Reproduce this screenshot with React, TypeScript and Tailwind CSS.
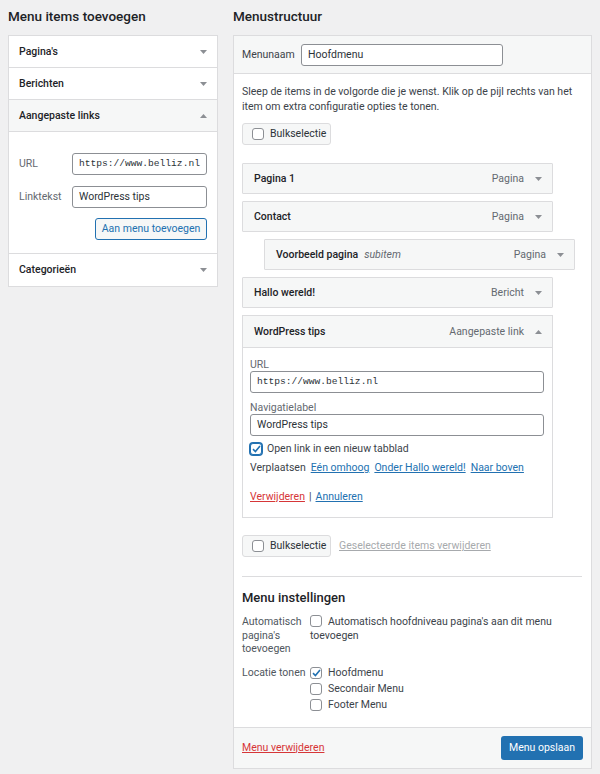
import React from 'react';

const font = "font-['Roboto','Liberation_Sans',sans-serif]";

function Arrow({ up = false }: { up?: boolean }) {
  return (
    <svg width="7" height="4" viewBox="0 0 7 4" className="shrink-0">
      <path d={up ? 'M0 4 L3.5 0 L7 4 Z' : 'M0 0 L7 0 L3.5 4 Z'} fill="#8c8f94" />
    </svg>
  );
}

function Check({ checked = false, focus = false }: { checked?: boolean; focus?: boolean }) {
  return (
    <span
      className={`inline-flex h-[12px] w-[12px] shrink-0 items-center justify-center rounded-[3px] border bg-white align-[-2px] ${
        focus ? 'border-[#2271b1] ring-1 ring-[#2271b1]' : 'border-[#8c8f94]'
      }`}
    >
      {checked && (
        <svg width="9" height="8" viewBox="0 0 9 8">
          <path d="M1 4.2 L3.4 6.5 L8 1" fill="none" stroke="#2271b1" strokeWidth="1.6" />
        </svg>
      )}
    </span>
  );
}

function BulkButton() {
  return (
    <button className="flex h-[22px] w-[89px] items-center gap-[6px] rounded-[3px] border border-[#dcdcde] bg-[#f6f7f7] pl-[9px] text-[10.5px] text-[#2c3338]">
      <Check />
      Bulkselectie
    </button>
  );
}

function Accordion({ title, open = false, last = false }: { title: string; open?: boolean; last?: boolean }) {
  return (
    <div
      className={`flex h-[32px] items-center justify-between px-[10px] ${last ? '' : 'border-b border-[#dcdcde]'} ${
        open ? 'bg-[#f6f7f7]' : 'bg-white'
      }`}
    >
      <span className="text-[10.5px] font-medium text-[#1d2327]">{title}</span>
      <Arrow up={open} />
    </div>
  );
}

function MenuItem({ title, type, sub }: { title: string; type: string; sub?: string }) {
  return (
    <div
      className={`flex h-[31px] w-[311px] items-center rounded-[1px] border border-[#dcdcde] bg-[#f6f7f7] pl-[11px] pr-[10px] ${
        sub ? 'ml-[22px]' : ''
      }`}
    >
      <span className="text-[10.5px] font-medium text-[#1d2327]">{title}</span>
      {sub && <span className="ml-[6px] text-[10.5px] italic text-[#646970]">{sub}</span>}
      <span className="ml-auto mr-[11px] text-[10.5px] text-[#646970]">{type}</span>
      <Arrow />
    </div>
  );
}

export default function App() {
  return (
    <div className={`${font} flex min-h-[774px] gap-[15px] bg-[#f0f0f1] pl-[8px] text-[#3c434a]`}>
      {/* linker kolom */}
      <div className="w-[210px] shrink-0">
        <h2 className="h-[35px] pt-[7px] text-[13.5px] font-medium leading-[18px] text-[#1d2327]">
          Menu items toevoegen
        </h2>
        <div className="border border-[#dcdcde] bg-white">
          <Accordion title="Pagina's" />
          <Accordion title="Berichten" />
          <Accordion title="Aangepaste links" open />
          <div className="border-b border-[#dcdcde] px-[10px] pb-[13px] pt-[21px]">
            <div className="flex items-center">
              <span className="w-[53px] text-[10.5px] text-[#646970]">URL</span>
              <div className="flex h-[22px] w-[135px] items-center rounded-[3px] border border-[#8c8f94] px-[6px] font-['Liberation_Mono',monospace] text-[9.6px] text-[#2c3338]">
                https://www.belliz.nl
              </div>
            </div>
            <div className="mt-[11px] flex items-center">
              <span className="w-[53px] text-[10.5px] text-[#646970]">Linktekst</span>
              <div className="flex h-[22px] w-[135px] items-center rounded-[3px] border border-[#8c8f94] px-[6px] text-[10.5px] text-[#2c3338]">
                WordPress tips
              </div>
            </div>
            <div className="mt-[10px] flex justify-end">
              <button className="h-[22px] w-[112px] rounded-[3px] border border-[#2271b1] bg-[#f6f7f7] text-[10.5px] text-[#2271b1]">
                Aan menu toevoegen
              </button>
            </div>
          </div>
          <Accordion title="Categorieën" last />
        </div>
      </div>

      {/* rechter kolom */}
      <div className="w-[359px] shrink-0">
        <h2 className="h-[35px] pt-[7px] text-[13.5px] font-medium leading-[18px] text-[#1d2327]">Menustructuur</h2>
        <div className="border border-[#dcdcde] bg-white">
          <div className="flex h-[38px] items-center border-b border-[#dcdcde] bg-[#f6f7f7] px-[8px]">
            <span className="w-[59px] text-[10.5px] text-[#3c434a]">Menunaam</span>
            <div className="flex h-[22px] w-[202px] items-center rounded-[3px] border border-[#8c8f94] bg-white px-[6px] text-[10.5px] text-[#2c3338]">
              Hoofdmenu
            </div>
          </div>

          <div className="pl-[8px] pr-[9px] pt-[10px]">
            <p className="text-[10.5px] leading-[15px] text-[#3c434a]">
              Sleep de items in de volgorde die je wenst. Klik op de pijl rechts van het item om extra configuratie opties te
              tonen.
            </p>
            <div className="mt-[9px]">
              <BulkButton />
            </div>

            <div className="mt-[18px] flex flex-col gap-[7px]">
              <MenuItem title="Pagina 1" type="Pagina" />
              <MenuItem title="Contact" type="Pagina" />
              <MenuItem title="Voorbeeld pagina" sub="subitem" type="Pagina" />
              <MenuItem title="Hallo wereld!" type="Bericht" />

              <div className="w-[311px] border border-[#dcdcde] bg-white">
                <div className="flex h-[32px] items-center border-b border-[#dcdcde] bg-[#f6f7f7] pl-[11px] pr-[10px]">
                  <span className="text-[10.5px] font-medium text-[#1d2327]">WordPress tips</span>
                  <span className="ml-auto mr-[11px] text-[10.5px] text-[#646970]">Aangepaste link</span>
                  <Arrow up />
                </div>
                <div className="pb-[13px] pl-[7px] pr-[8px] pt-[10px] text-[10.5px]">
                  <div className="leading-[13px] text-[#646970]">URL</div>
                  <div className="flex h-[22px] items-center rounded-[3px] border border-[#8c8f94] px-[6px] font-['Liberation_Mono',monospace] text-[9.6px] text-[#2c3338]">
                    https://www.belliz.nl
                  </div>
                  <div className="mt-[8px] leading-[13px] text-[#646970]">Navigatielabel</div>
                  <div className="flex h-[22px] items-center rounded-[3px] border border-[#8c8f94] px-[6px] text-[#2c3338]">
                    WordPress tips
                  </div>
                  <div className="mt-[6px] flex h-[14px] items-center gap-[5px] text-[#3c434a]">
                    <Check checked focus />
                    Open link in een nieuw tabblad
                  </div>
                  <div className="mt-[5px] flex h-[14px] items-center gap-[5px]">
                    <span className="text-[#3c434a]">Verplaatsen</span>
                    <a className="text-[#2271b1] underline">Eén omhoog</a>
                    <a className="text-[#2271b1] underline">Onder Hallo wereld!</a>
                    <a className="text-[#2271b1] underline">Naar boven</a>
                  </div>
                  <div className="mt-[15px] flex h-[14px] items-center gap-[4px]">
                    <a className="text-[#d63638] underline">Verwijderen</a>
                    <span className="text-[#3c434a]">|</span>
                    <a className="text-[#2271b1] underline">Annuleren</a>
                  </div>
                </div>
              </div>
            </div>

            <div className="mt-[17px] flex items-center gap-[8px]">
              <BulkButton />
              <a className="text-[10.5px] text-[#a7aaad] underline">Geselecteerde items verwijderen</a>
            </div>

            <div className="mt-[19px] border-t border-[#dcdcde]" />

            <h3 className="mt-[12px] text-[13px] font-medium leading-[18px] text-[#1d2327]">Menu instellingen</h3>

            <div className="mt-[8px] flex text-[10.5px] leading-[13.5px]">
              <div className="w-[68px] shrink-0 text-[#50575e]">
                Automatisch
                <br />
                pagina's
                <br />
                toevoegen
              </div>
              <div className="flex-1 pr-[20px] text-[#3c434a]">
                <Check />
                <span className="ml-[6px]">Automatisch hoofdniveau pagina's aan dit menu toevoegen</span>
              </div>
            </div>

            <div className="mt-[9px] flex text-[10.5px] leading-[16px]">
              <div className="w-[68px] shrink-0 text-[#50575e]">Locatie tonen</div>
              <div className="flex flex-col text-[#3c434a]">
                <label className="flex items-center gap-[6px]">
                  <Check checked />
                  Hoofdmenu
                </label>
                <label className="flex items-center gap-[6px]">
                  <Check />
                  Secondair Menu
                </label>
                <label className="flex items-center gap-[6px]">
                  <Check />
                  Footer Menu
                </label>
              </div>
            </div>
          </div>

          <div className="mt-[14px] flex h-[41px] items-center justify-between border-t border-[#dcdcde] bg-[#f6f7f7] pl-[8px] pr-[8px]">
            <a className="text-[10.5px] text-[#d63638] underline">Menu verwijderen</a>
            <button className="h-[24px] w-[82px] rounded-[3px] bg-[#2271b1] text-[10.5px] text-white">Menu opslaan</button>
          </div>
        </div>
      </div>
    </div>
  );
}
